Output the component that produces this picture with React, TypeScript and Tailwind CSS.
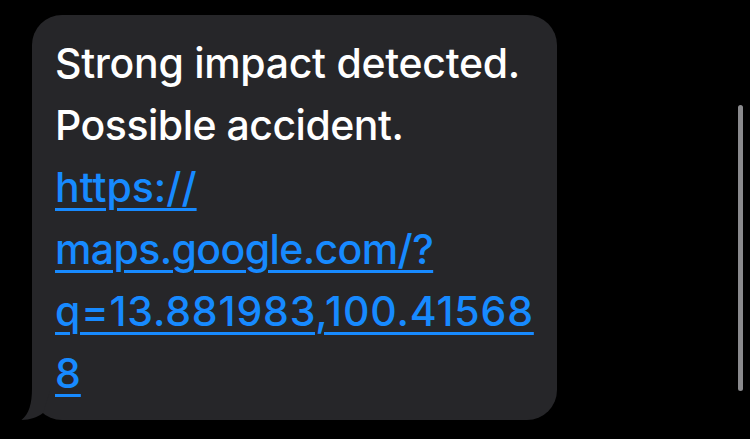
import React from 'react';

const linkLines = [
  { text: 'https://', track: 'tracking-[0px]' },
  { text: 'maps.google.com/?', track: 'tracking-[-0.6px]' },
  { text: 'q=13.881983,100.41568', track: 'tracking-[0.85px]' },
  { text: '8', track: 'tracking-[0px]' },
];

// iMessage style tail on the bottom-left corner
function BubbleTail() {
  return (
    <svg className="absolute -left-[11px] bottom-0" width="32" height="32" viewBox="0 0 32 32">
      <path d="M11 0 C11 16 8 26 0.5 32 C9 32 17 29 22 25 L30 0 Z" fill="#262629" />
    </svg>
  );
}

export default function App() {
  return (
    <div className="relative flex w-[750px] h-[439px] bg-black overflow-hidden pl-[32px] pt-[15px] font-['Inter','Liberation_Sans',sans-serif]">
      <div className="relative flex flex-col w-[525px] h-[405px] rounded-[30px] bg-[#262629] pl-[23px] pt-[17px] text-[41px] font-medium leading-[62px] tracking-[-0.3px] text-white">
        <span>Strong impact detected.</span>
        <span className="tracking-[-0.5px]">Possible accident.</span>
        <a href="#" className="flex flex-col text-[#178aff]">
          {linkLines.map((l) => (
            <span key={l.text} className={l.track}>
              <span className="underline decoration-[3px] underline-offset-[6px]">{l.text}</span>
            </span>
          ))}
        </a>
        <BubbleTail />
      </div>
      <div className="absolute left-[738px] top-[105px] w-[5px] h-[286px] rounded-full bg-[#8a8a8d]" />
    </div>
  );
}
